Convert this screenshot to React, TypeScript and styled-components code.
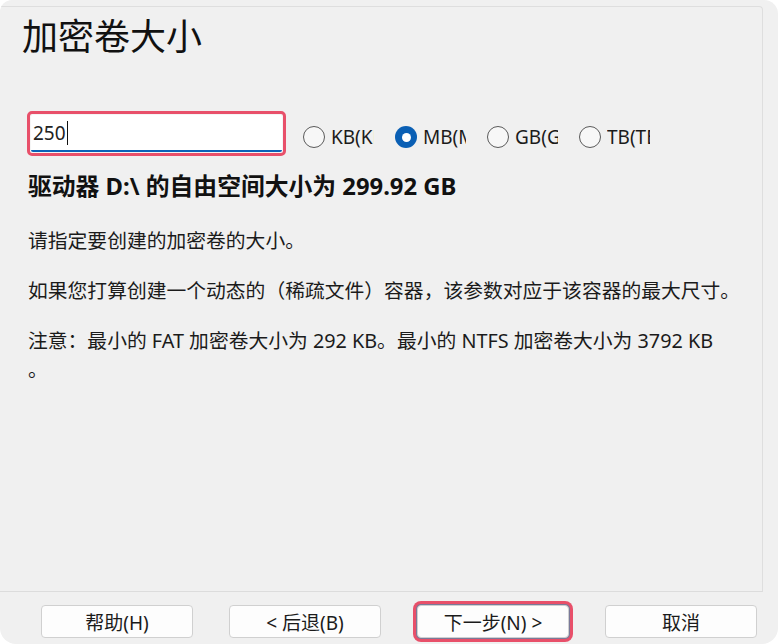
import React from "react";
import styled, { createGlobalStyle } from "styled-components";

const GlobalStyle = createGlobalStyle`
  html, body { margin: 0; padding: 0; background: #ffffff; }
  body { font-family: "Noto Sans", "Noto Sans CJK SC", sans-serif; color: #1b1b1b; }
  * { box-sizing: border-box; }
`;

const Window = styled.div`
  width: 778px;
  height: 644px;
  background: #f0f0f0;
  border-radius: 12px 14px 16px 16px;
  display: flex;
  flex-direction: column;
  overflow: hidden;
`;

const Panel = styled.div`
  margin-top: 6px;
  width: 763px;
  height: 586px;
  border-top: 1px solid #dedede;
  border-right: 1px solid #dedede;
  border-bottom: 1px solid #dcdcdc;
  border-top-right-radius: 4px;
  padding: 6px 0 0 22px;
  display: flex;
  flex-direction: column;
`;

const Title = styled.h1`
  margin: 0;
  font-size: 36px;
  font-weight: 400;
  line-height: 48px;
  color: #111;
`;

const SizeRow = styled.div`
  display: flex;
  align-items: center;
  margin-top: 50px;
  margin-left: 5px;
`;

const Highlight = styled.div`
  border: 3px solid #e8506a;
  border-radius: 5px;
  padding: 1px;
  background: #f5f5f5;
`;

const SizeInput = styled.div`
  width: 251px;
  height: 37px;
  background: #ffffff;
  border-bottom: 2px solid #0a62b8;
  border-radius: 2px;
  display: flex;
  align-items: center;
  padding-left: 2px;
  font-size: 19px;
  color: #222;
`;

const Caret = styled.span`
  display: inline-block;
  width: 1px;
  height: 24px;
  background: #111;
  margin-left: 1px;
`;

const Units = styled.div`
  display: flex;
  gap: 21px;
  margin-left: 17px;
  padding-top: 7px;
`;

const Unit = styled.label`
  display: flex;
  align-items: center;
  gap: 6px;
`;

const Radio = styled.span<{ $checked?: boolean }>`
  width: 22px;
  height: 22px;
  border-radius: 50%;
  border: ${(p) => (p.$checked ? "none" : "1px solid #5a5a5a")};
  background: ${(p) => (p.$checked ? "#0a5fb4" : "#f7f7f7")};
  display: flex;
  align-items: center;
  justify-content: center;
  &::after {
    content: "";
    display: ${(p) => (p.$checked ? "block" : "none")};
    width: 9px;
    height: 9px;
    border-radius: 50%;
    background: #ffffff;
  }
`;

const UnitLabel = styled.span`
  width: 43px;
  overflow: hidden;
  white-space: nowrap;
  font-size: 19px;
  color: #1b1b1b;
`;

const FreeSpace = styled.div`
  margin-top: 14px;
  margin-left: 6px;
  font-size: 23.8px;
  font-weight: 700;
  line-height: 32px;
  color: #111;
`;

const Text = styled.p<{ $nowrap?: boolean }>`
  margin: 0;
  margin-left: 6px;
  font-size: 19.8px;
  line-height: 29px;
  color: #1b1b1b;
  white-space: ${(p) => (p.$nowrap ? "nowrap" : "normal")};
`;

const TextBlock = styled.div`
  display: flex;
  flex-direction: column;
  gap: 21px;
  margin-top: 24px;
`;

const Footer = styled.div`
  display: flex;
  gap: 36px;
  padding: 13px 0 0 41px;
`;

const Button = styled.button<{ $focused?: boolean }>`
  width: 152px;
  height: 33px;
  background: #fdfdfd;
  border: 1px solid #d0d0d0;
  border-radius: 4px;
  font-family: inherit;
  font-size: 19px;
  color: #1b1b1b;
  padding: 0;
  box-shadow: ${(p) => (p.$focused ? "0 0 0 1px #7a7a9a, 0 0 0 4px #e8506a" : "none")};
`;

export default function App() {
  const units = [
    { label: "KB(KB)", checked: false },
    { label: "MB(MB)", checked: true },
    { label: "GB(GB)", checked: false },
    { label: "TB(TB)", checked: false },
  ];
  return (
    <>
      <GlobalStyle />
      <Window>
        <Panel>
          <Title>加密卷大小</Title>
          <SizeRow>
            <Highlight>
              <SizeInput>
                250
                <Caret />
              </SizeInput>
            </Highlight>
            <Units>
              {units.map((u) => (
                <Unit key={u.label}>
                  <Radio $checked={u.checked} />
                  <UnitLabel>{u.label}</UnitLabel>
                </Unit>
              ))}
            </Units>
          </SizeRow>
          <FreeSpace>驱动器 D:\ 的自由空间大小为 299.92 GB</FreeSpace>
          <TextBlock>
            <Text>请指定要创建的加密卷的大小。</Text>
            <Text>如果您打算创建一个动态的（稀疏文件）容器，该参数对应于该容器的最大尺寸。</Text>
            <Text $nowrap>
              注意：最小的 FAT 加密卷大小为 292 KB。最小的 NTFS 加密卷大小为 3792 KB
              <br />。
            </Text>
          </TextBlock>
        </Panel>
        <Footer>
          <Button>帮助(H)</Button>
          <Button>&lt; 后退(B)</Button>
          <Button $focused>下一步(N) &gt;</Button>
          <Button>取消</Button>
        </Footer>
      </Window>
    </>
  );
}
